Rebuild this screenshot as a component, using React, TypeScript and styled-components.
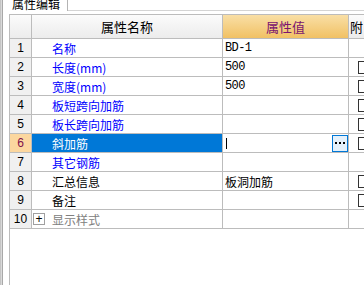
import React from 'react';
import styled, { createGlobalStyle, css } from 'styled-components';

const Global = createGlobalStyle`
  html, body { margin: 0; padding: 0; background: #fff; overflow: hidden; }
  body { font-family: "Noto Sans CJK SC", "Liberation Sans", sans-serif; font-size: 12px; color: #000; }
`;

const Window = styled.div`
  width: 364px;
  height: 285px;
  display: flex;
  background: #fff;
  overflow: hidden;
`;

const EdgeStrip = styled.div`
  width: 3px;
  flex: none;
  background: linear-gradient(to right, #c4c4c4 0 1px, #dadada 1px 2px, #a8a8a8 2px 3px);
`;

const Panel = styled.div`
  flex: 1;
  min-width: 0;
  display: flex;
  flex-direction: column;
`;

const TabBar = styled.div`
  height: 11px;
  flex: none;
  display: flex;
`;

const Tab = styled.div`
  width: 65px;
  flex: none;
  box-sizing: border-box;
  border-right: 1px solid #b4b4b4;
  padding-left: 9px;
  display: flex;
  align-items: flex-end;
  overflow: hidden;
`;

const TabLabel = styled.span`
  line-height: 12px;
  margin-bottom: 1px;
  white-space: nowrap;
`;

const TabFill = styled.div`
  flex: 1;
  border-bottom: 1px solid #d4d4d4;
`;

const Body = styled.div`
  flex: 1;
  display: flex;
  padding: 3px 0 0 6px;
  min-height: 0;
`;

const Grid = styled.div`
  flex: 1;
  border-top: 1px solid #bcbcbc;
  border-left: 1px solid #bcbcbc;
  overflow: hidden;
`;

const Row = styled.div<{ $header?: boolean }>`
  display: grid;
  grid-template-columns: 22px 191px 126px 40px;
  height: ${p => (p.$header ? 24 : 19)}px;
`;

const cellBase = css`
  box-sizing: border-box;
  border-right: 1px solid #bcbcbc;
  border-bottom: 1px solid #bcbcbc;
  display: flex;
  align-items: center;
  white-space: nowrap;
  overflow: hidden;
  min-width: 0;
`;

const HeadCell = styled.div<{ $accent?: boolean; $align?: 'center' | 'left' }>`
  ${cellBase};
  justify-content: ${p => (p.$align === 'left' ? 'flex-start' : 'center')};
  padding-left: ${p => (p.$align === 'left' ? '1px' : '0')};
  font-size: 13px;
  color: ${p => (p.$accent ? '#7a1470' : '#000')};
  background: ${p =>
    p.$accent
      ? 'linear-gradient(to bottom, #f9dfa6, #f1c164)'
      : 'linear-gradient(to bottom, #fbfbfb, #ececec)'};
`;

const NumCell = styled.div<{ $active?: boolean }>`
  ${cellBase};
  justify-content: center;
  font-family: "Liberation Sans", "DejaVu Sans", sans-serif;
  font-size: 12px;
  background: ${p => (p.$active ? '#fcd79f' : '#f0f0f0')};
  color: ${p => (p.$active ? '#80104a' : '#000')};
`;

type Tone = 'link' | 'plain' | 'muted';

const NameCell = styled.div<{ $tone: Tone; $selected?: boolean }>`
  ${cellBase};
  padding-left: ${p => (p.$tone === 'muted' ? '1px' : '20px')};
  gap: 7px;
  background: ${p => (p.$selected ? '#0078d7' : '#fff')};
  color: ${p =>
    p.$selected ? '#fff' : p.$tone === 'link' ? '#0000ff' : p.$tone === 'muted' ? '#808080' : '#000'};
`;

const ValueCell = styled.div`
  ${cellBase};
  padding-left: 2px;
  padding-right: 0;
`;

const ExtraCell = styled.div`
  ${cellBase};
  padding-left: 9px;
`;

const Caret = styled.span`
  width: 1px;
  height: 11px;
  background: #000;
  margin-left: 1px;
`;

const EllipsisButton = styled.div`
  margin-left: auto;
  width: 16px;
  height: 17px;
  box-sizing: border-box;
  border: 1px solid #0078d7;
  background: #e5f1fb;
  display: flex;
  align-items: center;
  justify-content: center;
  gap: 2px;
`;

const Dot = styled.span`
  width: 2px;
  height: 2px;
  background: #000;
`;

const Check = styled.span`
  width: 13px;
  height: 13px;
  flex: none;
  box-sizing: border-box;
  border: 1px solid #333;
  background: #fff;
`;

const Expander = styled.span`
  width: 12px;
  height: 12px;
  flex: none;
  box-sizing: border-box;
  border: 1px solid #a0a0a0;
  display: flex;
  align-items: center;
  justify-content: center;
  font-family: "Liberation Sans", sans-serif;
  font-size: 12px;
  line-height: 1;
  color: #000;
`;

const Mono = styled.span`
  font-family: "Liberation Mono", monospace;
  font-size: 12px;
  letter-spacing: -0.6px;
`;

type RowData = {
  name: string;
  tone: Tone;
  value?: string;
  mono?: boolean;
  check?: boolean;
  active?: boolean;
  expander?: boolean;
};

const rows: RowData[] = [
  { name: '名称', tone: 'link', value: 'BD-1', mono: true },
  { name: '长度(mm)', tone: 'link', value: '500', mono: true, check: true },
  { name: '宽度(mm)', tone: 'link', value: '500', mono: true, check: true },
  { name: '板短跨向加筋', tone: 'link', check: true },
  { name: '板长跨向加筋', tone: 'link', check: true },
  { name: '斜加筋', tone: 'link', check: true, active: true },
  { name: '其它钢筋', tone: 'link' },
  { name: '汇总信息', tone: 'plain', value: '板洞加筋', check: true },
  { name: '备注', tone: 'plain', check: true },
  { name: '显示样式', tone: 'muted', expander: true },
];

export default function App() {
  return (
    <>
      <Global />
      <Window>
        <EdgeStrip />
        <Panel>
          <TabBar>
            <Tab>
              <TabLabel>属性编辑</TabLabel>
            </Tab>
            <TabFill />
          </TabBar>
          <Body>
            <Grid>
              <Row $header>
                <HeadCell />
                <HeadCell>属性名称</HeadCell>
                <HeadCell $accent>属性值</HeadCell>
                <HeadCell $align="left">附</HeadCell>
              </Row>
              {rows.map((r, i) => (
                <Row key={i}>
                  <NumCell $active={r.active}>{i + 1}</NumCell>
                  <NameCell $tone={r.tone} $selected={r.active}>
                    {r.expander && <Expander>+</Expander>}
                    {r.name}
                  </NameCell>
                  <ValueCell>
                    {r.active ? (
                      <>
                        <Caret />
                        <EllipsisButton>
                          <Dot />
                          <Dot />
                          <Dot />
                        </EllipsisButton>
                      </>
                    ) : r.value ? (
                      r.mono ? <Mono>{r.value}</Mono> : r.value
                    ) : null}
                  </ValueCell>
                  <ExtraCell>{r.check && <Check />}</ExtraCell>
                </Row>
              ))}
            </Grid>
          </Body>
        </Panel>
      </Window>
    </>
  );
}
